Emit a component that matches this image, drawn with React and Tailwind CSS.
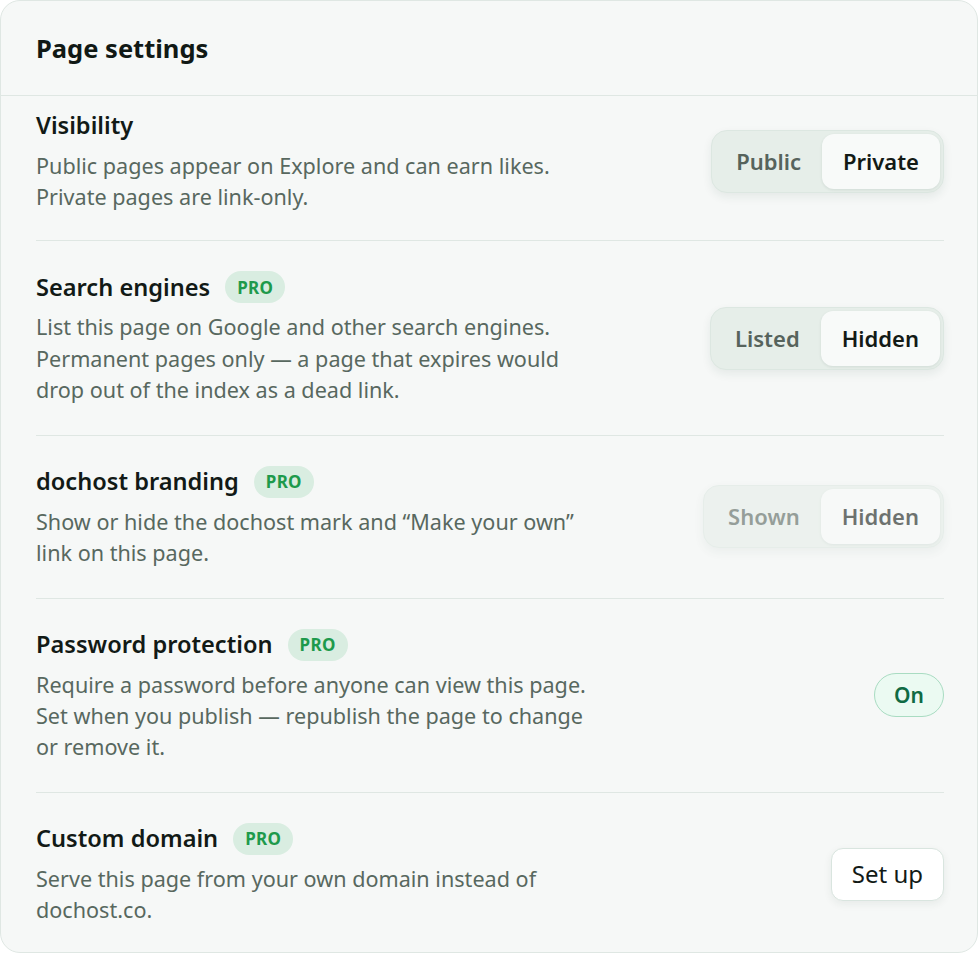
import React from "react";

const font = { fontFamily: '"Noto Sans", "Open Sans", sans-serif' };

function Pro() {
  return (
    <span className="inline-flex h-8 items-center rounded-full bg-[#d9ede1] px-[12px] text-[17px] font-bold tracking-[0.3px] text-[#1e9a4c]">
      PRO
    </span>
  );
}

function Segmented({ options, active, disabled }) {
  return (
    <div
      className={
        "flex rounded-[16px] border border-[#dce7e1] bg-[#e6eee9] p-[3px] shadow-[0_4px_10px_rgba(30,60,45,0.08)] " +
        (disabled ? "opacity-60" : "")
      }
    >
      {options.map((o) => (
        <div
          key={o}
          className={
            "flex h-[55px] items-center px-[21px] text-[22px] font-semibold " +
            (o === active
              ? "rounded-[12px] bg-[#f8faf9] text-[#131a16] shadow-[0_1px_3px_rgba(30,60,45,0.10)]"
              : "text-[#56635c]")
          }
        >
          {o}
        </div>
      ))}
    </div>
  );
}

function Row({ title, pro, desc, control, first, last }) {
  return (
    <div
      className={
        "flex items-center justify-between " +
        (first ? "pt-[14px] pb-[28px] " : "pt-[30px] pb-[29.6px] ") +
        (last ? "" : "border-b border-[#dfe7e3]")
      }
    >
      <div className="max-w-[562px]">
        <div className="flex h-8 items-center gap-[15px]">
          <span className="text-[23.6px] font-semibold text-[#121a16]">{title}</span>
          {pro && <Pro />}
        </div>
        <div className="mt-[8px] text-[21.6px] leading-[31.2px] text-[#58685f]">{desc}</div>
      </div>
      <div className="shrink-0">{control}</div>
    </div>
  );
}

export default function App() {
  return (
    <div style={font} className="w-[980px] h-[953px] bg-white">
      <div className="h-[953px] w-[978px] rounded-[20px] border border-[#dfe7e3] bg-[#f6f8f7]">
        <div className="flex h-[95px] items-center border-b border-[#dfe7e3] pl-[35px] pr-[34px]">
          <h1 className="text-[25.5px] font-bold text-[#111915]">Page settings</h1>
        </div>
        <div className="pl-[35px] pr-[33px]">
          <Row
            first
            title="Visibility"
            desc={
              <>
                Public pages appear on Explore and can earn likes.
                <br />
                Private pages are link-only.
              </>
            }
            control={<Segmented options={["Public", "Private"]} active="Private" />}
          />
          <Row
            title="Search engines"
            pro
            desc="List this page on Google and other search engines. Permanent pages only — a page that expires would drop out of the index as a dead link."
            control={<Segmented options={["Listed", "Hidden"]} active="Hidden" />}
          />
          <Row
            title="dochost branding"
            pro
            desc="Show or hide the dochost mark and “Make your own” link on this page."
            control={<Segmented options={["Shown", "Hidden"]} active="Hidden" disabled />}
          />
          <Row
            title="Password protection"
            pro
            desc="Require a password before anyone can view this page. Set when you publish — republish the page to change or remove it."
            control={
              <div className="flex h-[44px] items-center rounded-full border border-[#a9dcc2] bg-[#ebfaf2] px-[19px] text-[21px] font-semibold text-[#0f6a44]">
                On
              </div>
            }
          />
          <Row
            last
            title="Custom domain"
            pro
            desc="Serve this page from your own domain instead of dochost.co."
            control={
              <div className="flex h-[53px] items-center rounded-[12px] border border-[#d9e5df] bg-white px-[20px] text-[24px] text-[#121a16] shadow-[0_3px_8px_rgba(30,60,45,0.07)]">
                Set up
              </div>
            }
          />
        </div>
      </div>
    </div>
  );
}
